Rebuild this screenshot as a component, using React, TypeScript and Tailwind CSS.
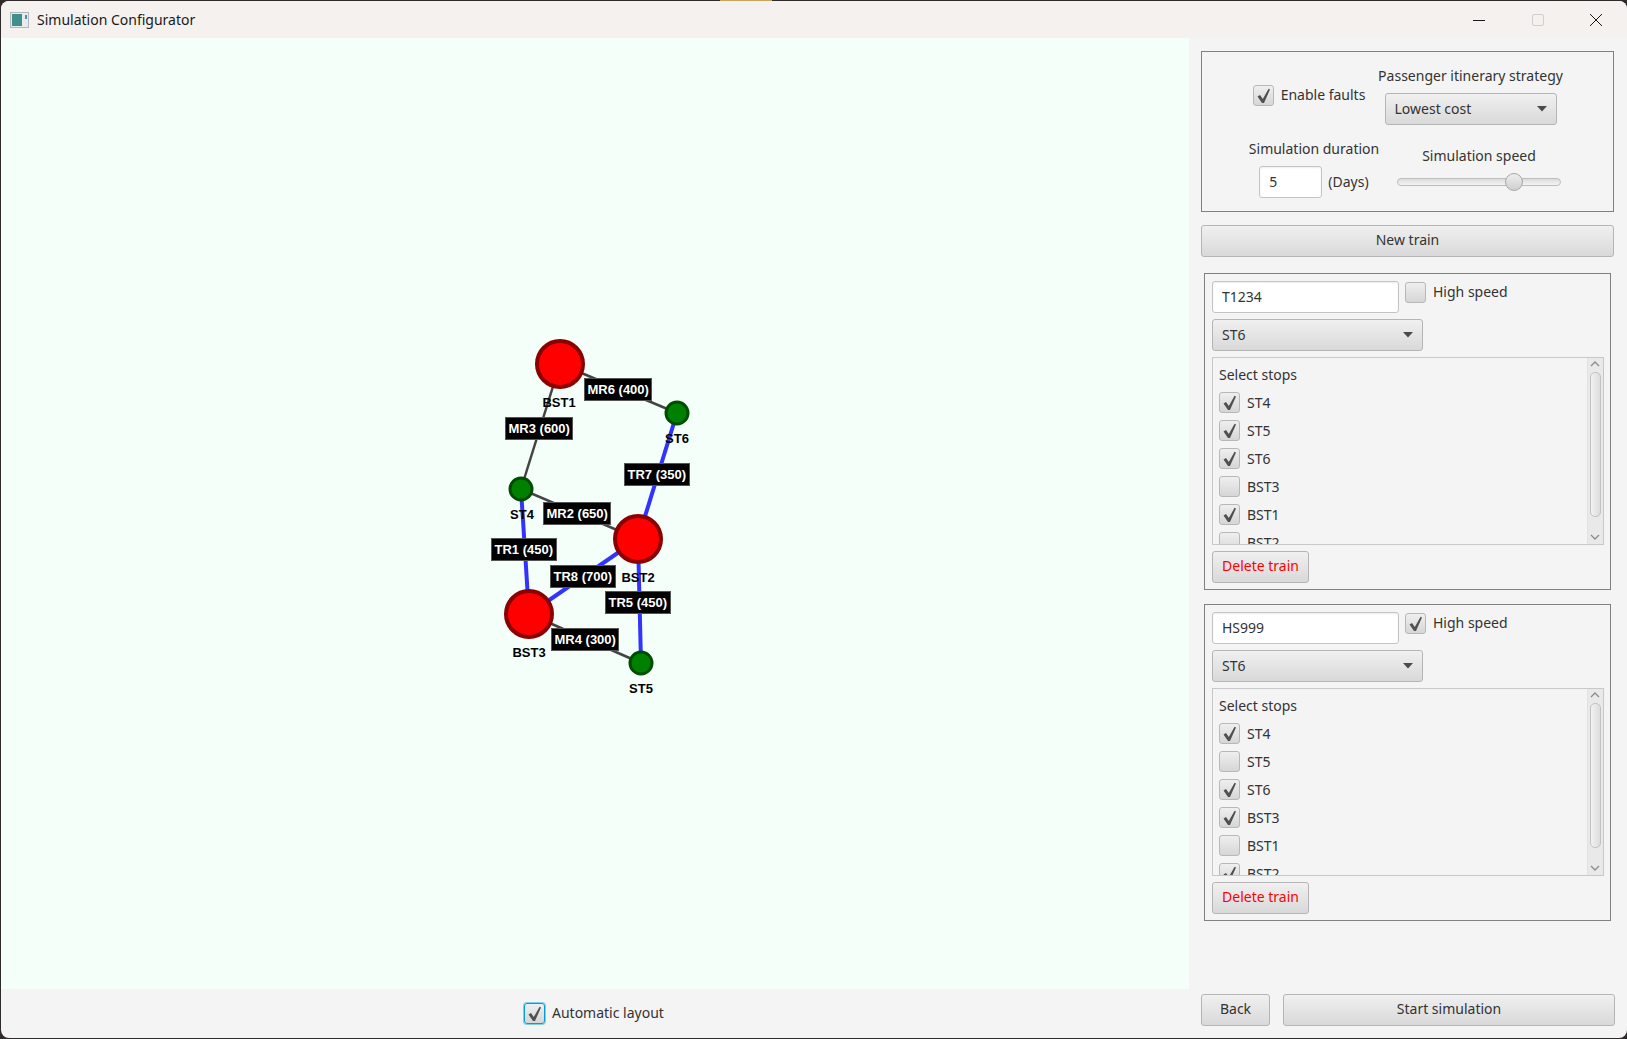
import React from "react";

type Stop = { name: string; on: boolean };

const nodes = [
  { id: "BST1", x: 559, y: 326, big: true, lx: 558, ly: 365 },
  { id: "ST6", x: 676, y: 375, big: false, lx: 676, ly: 401 },
  { id: "ST4", x: 520, y: 451, big: false, lx: 521, ly: 477 },
  { id: "BST2", x: 637, y: 501, big: true, lx: 637, ly: 540 },
  { id: "BST3", x: 528, y: 576, big: true, lx: 528, ly: 615 },
  { id: "ST5", x: 640, y: 625, big: false, lx: 640, ly: 651 },
];

const edges = [
  { a: "BST1", b: "ST4", fast: false },
  { a: "BST1", b: "ST6", fast: false },
  { a: "ST4", b: "BST2", fast: false },
  { a: "BST3", b: "ST5", fast: false },
  { a: "ST4", b: "BST3", fast: true },
  { a: "ST6", b: "BST2", fast: true },
  { a: "BST2", b: "BST3", fast: true },
  { a: "BST2", b: "ST5", fast: true },
];

const edgeLabels = [
  { text: "MR6 (400)", x: 583, y: 340 },
  { text: "MR3 (600)", x: 504, y: 379 },
  { text: "TR7 (350)", x: 623, y: 425 },
  { text: "MR2 (650)", x: 542, y: 464 },
  { text: "TR1 (450)", x: 490, y: 500 },
  { text: "TR8 (700)", x: 549, y: 527 },
  { text: "TR5 (450)", x: 604, y: 553 },
  { text: "MR4 (300)", x: 550, y: 590 },
];

const firstStops: Stop[] = [
  { name: "ST4", on: true },
  { name: "ST5", on: true },
  { name: "ST6", on: true },
  { name: "BST3", on: false },
  { name: "BST1", on: true },
  { name: "BST2", on: false },
];

const secondStops: Stop[] = [
  { name: "ST4", on: true },
  { name: "ST5", on: false },
  { name: "ST6", on: true },
  { name: "BST3", on: true },
  { name: "BST1", on: false },
  { name: "BST2", on: true },
];

function Check({ on, focused = false }: { on: boolean; focused?: boolean }) {
  return (
    <span
      className={
        "flex h-[21px] w-[21px] shrink-0 items-center justify-center rounded-[3px] border bg-linear-to-b from-[#efefef] to-[#d6d6d6] " +
        (focused ? "border-[#039ed3] shadow-[0_0_0_1px_#7fcfea]" : "border-[#b8b8b8]")
      }
    >
      {on && (
        <svg width="15" height="16" viewBox="0 0 15 16">
          <path d="M1.5 8.5 L4 7 L6.8 11 L12.6 0.8 L14 1.4 L8 15 L6 15 Z" fill="#505050" />
        </svg>
      )}
    </span>
  );
}

function Caret() {
  return (
    <svg width="10" height="6" viewBox="0 0 10 6">
      <path d="M0 0 H10 L5 5.5 Z" fill="#4a4a4a" />
    </svg>
  );
}

function Combo({ value, className }: { value: string; className: string }) {
  return (
    <div
      className={
        "flex items-center justify-between rounded-[3px] border border-[#b5b5b5] bg-linear-to-b from-[#f0f0f0] to-[#d9d9d9] pl-[9px] pr-[9px] " +
        className
      }
    >
      <span className="pb-[2px]">{value}</span>
      <Caret />
    </div>
  );
}

function Btn({ children, className }: { children: React.ReactNode; className: string }) {
  return (
    <button
      className={
        "flex items-center justify-center rounded-[3px] border border-[#b5b5b5] bg-linear-to-b from-[#f0f0f0] to-[#d9d9d9] pb-[3px] " +
        className
      }
    >
      {children}
    </button>
  );
}

function TextBox({ value, className }: { value: string; className: string }) {
  return (
    <input
      readOnly
      value={value}
      className={
        "rounded-[3px] border border-[#c4c4c4] bg-white pb-px pl-[9px] shadow-[inset_0_1px_2px_#eeeeee] outline-none " + className
      }
    />
  );
}

function Scrollbar() {
  return (
    <div className="flex w-[16px] shrink-0 flex-col items-center border-l border-[#e2e2e2] bg-[#e9e9e9] pr-px">
      <svg className="mt-[3px] shrink-0" width="10" height="6" viewBox="0 0 10 6" fill="none">
        <path d="M1 5 L5 1 L9 5" stroke="#8c8c8c" strokeWidth="1.3" />
      </svg>
      <div className="mt-[5px] h-[145px] w-[11px] shrink-0 rounded-[5px] border border-[#c2c2c2] bg-linear-to-r from-[#f2f2f2] to-[#dcdcdc]" />
      <svg className="mt-[17px] shrink-0" width="10" height="6" viewBox="0 0 10 6" fill="none">
        <path d="M1 1 L5 5 L9 1" stroke="#8c8c8c" strokeWidth="1.3" />
      </svg>
    </div>
  );
}

function TrainBox({ name, fast, stops }: { name: string; fast: boolean; stops: Stop[] }) {
  return (
    <section className="mx-[3px] flex h-[317px] w-[407px] flex-col border border-[#808080] px-[7px] pt-[7px]">
      <div className="flex items-start">
        <TextBox value={name} className="h-[32px] w-[187px]" />
        <div className="ml-[6px] mt-px flex h-[21px] items-center gap-[7px]">
          <Check on={fast} />
          <span className="pb-[2px]">High speed</span>
        </div>
      </div>
      <Combo value="ST6" className="mt-[6px] h-[32px] w-[211px]" />
      <div className="mt-[6px] flex h-[188px] w-[392px] border border-[#c8c8c8]">
        <div className="flex-1 overflow-hidden pl-[6px] pt-[7px]">
          <div className="h-[20px] leading-[20px]">Select stops</div>
          <ul className="mt-[7px] flex flex-col gap-[7px]">
            {stops.map((s) => (
              <li key={s.name} className="flex h-[21px] items-center gap-[7px]">
                <Check on={s.on} />
                <span>{s.name}</span>
              </li>
            ))}
          </ul>
        </div>
        <Scrollbar />
      </div>
      <Btn className="mt-[6px] h-[32px] w-[97px] text-[#ff0000]">Delete train</Btn>
    </section>
  );
}

function Graph() {
  const find = (id: string) => nodes.find((n) => n.id === id)!;
  return (
    <div className="relative flex-1 overflow-hidden bg-[#f5fffa]">
      <svg className="absolute inset-0" width="1188" height="952">
        {edges.map((e) => (
          <line
            key={e.a + e.b}
            x1={find(e.a).x}
            y1={find(e.a).y}
            x2={find(e.b).x}
            y2={find(e.b).y}
            stroke={e.fast ? "#3333ff" : "#444444"}
            strokeWidth={e.fast ? 4 : 2.5}
          />
        ))}
        {nodes.map((n) => (
          <circle
            key={n.id}
            cx={n.x}
            cy={n.y}
            r={n.big ? 23 : 11}
            fill={n.big ? "#ff0000" : "#008000"}
            stroke={n.big ? "#8b0000" : "#004d00"}
            strokeWidth={n.big ? 4 : 3}
          />
        ))}
      </svg>
      {nodes.map((n) => (
        <span
          key={n.id}
          className="absolute -translate-x-1/2 -translate-y-1/2 font-['Liberation_Sans',sans-serif] text-[13px] font-bold text-black"
          style={{ left: n.lx, top: n.ly }}
        >
          {n.id}
        </span>
      ))}
      {edgeLabels.map((l) => (
        <span
          key={l.text}
          className="absolute flex h-[23px] items-center whitespace-nowrap border border-[#555555] bg-black px-[2.5px] pt-px font-['Liberation_Sans',sans-serif] text-[13px] font-bold text-white"
          style={{ left: l.x, top: l.y }}
        >
          {l.text}
        </span>
      ))}
    </div>
  );
}

export default function App() {
  return (
    <div className="relative h-[1039px] w-[1627px] overflow-hidden bg-[#2e2b2a] font-['Noto_Sans',sans-serif] text-[14px] text-[#333333]">
      <span className="absolute left-[720px] top-0 h-px w-[52px] bg-[#c8a45c]" />
      <div className="ml-px mt-px flex h-[1037px] w-[1626px] flex-col overflow-hidden rounded-[8px] bg-[#f4f4f4]">
        <header className="flex h-[37px] shrink-0 items-center bg-[#f4f1ef] pl-[9px] text-[#1a1a1a]">
          <svg width="19" height="16" viewBox="0 0 19 16">
            <rect x="0.5" y="0.5" width="18" height="15" fill="#e8eaec" stroke="#b4b8bc" />
            <rect x="2" y="2" width="10" height="12" fill="#3f8f8f" />
            <rect x="15" y="3" width="2" height="4" fill="#4e8fb0" />
          </svg>
          <span className="ml-[8px] pb-px">Simulation Configurator</span>
          <div className="ml-auto mr-[25px] flex items-center gap-[46.5px]">
            <svg width="12" height="12" viewBox="0 0 12 12">
              <path d="M0 6.5 H12" stroke="#1a1a1a" strokeWidth="1" />
            </svg>
            <svg width="12" height="12" viewBox="0 0 12 12" fill="none">
              <rect x="0.5" y="0.5" width="11" height="11" rx="1.5" stroke="#cfcfcf" />
            </svg>
            <svg width="12" height="12" viewBox="0 0 12 12">
              <path d="M0 0 L12 12 M12 0 L0 12" stroke="#1a1a1a" strokeWidth="1" />
            </svg>
          </div>
        </header>
        <div className="flex flex-1">
          <main className="flex w-[1188px] flex-col">
            <Graph />
            <footer className="flex h-[49px] shrink-0 items-center gap-[7px] pl-[523px]">
              <Check on focused />
              <span className="pb-[2px]">Automatic layout</span>
            </footer>
          </main>
          <aside className="flex w-[438px] flex-col pl-[12px] pt-[13px]">
            <section className="h-[161px] w-[413px] border border-[#808080] pl-[47px] pt-[14px]">
              <div className="grid grid-cols-[130px_183px] grid-rows-[59px_59px] gap-y-[14px]">
                <div className="mr-[10px] flex items-center justify-center gap-[7px]">
                  <Check on />
                  <span className="pb-[2px]">Enable faults</span>
                </div>
                <div className="flex flex-col items-center">
                  <span className="h-[20px] whitespace-nowrap leading-[20px]">Passenger itinerary strategy</span>
                  <Combo value="Lowest cost" className="mt-[7px] h-[32px] w-[172px]" />
                </div>
                <div className="flex flex-col items-center">
                  <span className="h-[20px] whitespace-nowrap leading-[20px]">Simulation duration</span>
                  <div className="mt-[7px] flex items-center gap-[6px]">
                    <TextBox value="5" className="h-[32px] w-[63px]" />
                    <span className="pb-px">(Days)</span>
                  </div>
                </div>
                <div className="ml-[17px] mt-[7px] flex flex-col items-center">
                  <span className="h-[20px] whitespace-nowrap leading-[20px]">Simulation speed</span>
                  <div className="flex h-[32px] w-[164px] items-center">
                    <div className="relative h-[8px] w-full rounded-[4px] border border-[#bdbdbd] bg-linear-to-b from-[#dcdcdc] to-[#f4f4f4]">
                      <span className="absolute left-[107px] top-[-6px] h-[18px] w-[18px] rounded-full border border-[#a8a8a8] bg-linear-to-b from-[#eeeeee] to-[#cfcfcf]" />
                    </div>
                  </div>
                </div>
              </div>
            </section>
            <Btn className="mt-[13px] h-[32px] w-[413px] shrink-0">New train</Btn>
            <div className="mt-[16px] flex flex-col gap-[14px]">
              <TrainBox name="T1234" fast={false} stops={firstStops} />
              <TrainBox name="HS999" fast stops={secondStops} />
            </div>
            <div className="mt-[73px] flex gap-[13px]">
              <Btn className="h-[32px] w-[69px]">Back</Btn>
              <Btn className="h-[32px] w-[332px]">Start simulation</Btn>
            </div>
          </aside>
        </div>
      </div>
    </div>
  );
}
